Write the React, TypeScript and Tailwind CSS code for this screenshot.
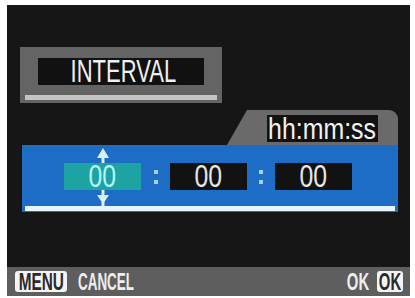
import React from 'react';

const font = { fontFamily: '"Liberation Sans", Arial, sans-serif' };

function Squeezed({ text, className }: { text: string; className: string }) {
  return <span className={`inline-block whitespace-nowrap leading-none ${className}`}>{text}</span>;
}

function Colon() {
  return (
    <div className="w-[28px] h-[27px] flex flex-col items-center justify-center gap-[6px]">
      <div className="w-[4px] h-[4px] bg-[#9fd4f2]" />
      <div className="w-[4px] h-[4px] bg-[#9fd4f2]" />
    </div>
  );
}

function Field({ active }: { active?: boolean }) {
  return (
    <div
      className={`relative w-[77px] h-[27px] flex items-center justify-center ${
        active ? 'bg-[#1ea3a3]' : 'bg-[#121212]'
      }`}
    >
      <Squeezed
        text="00"
        className={`text-[31px] scale-x-[0.8] ${active ? 'text-[#b5f3f5]' : 'text-[#e6e6e6]'}`}
      />
      {active && (
        <>
          <svg className="absolute left-[33px] -top-[15px]" width="12" height="15" viewBox="0 0 12 15">
            <polygon points="6,0 12,10 0,10" fill="#d8f2f6" />
            <rect x="4.5" y="10" width="3" height="5" fill="#d8f2f6" />
          </svg>
          <svg className="absolute left-[33px] -bottom-[17px]" width="12" height="17" viewBox="0 0 12 17">
            <rect x="4.5" y="0" width="3" height="5" fill="#d8f2f6" />
            <polygon points="0,5 12,5 6,14" fill="#d8f2f6" />
            <rect x="4.5" y="12" width="3" height="5" fill="#d8f2f6" />
          </svg>
        </>
      )}
    </div>
  );
}

export default function App() {
  return (
    <div className="w-[415px] h-[298px] bg-white overflow-hidden pt-[5px]" style={font}>
      <div className="ml-[7px] w-[403px] h-[291px] bg-[#161616] flex flex-col">
        <div className="flex-1 flex flex-col pt-[42px]">
          {/* title box */}
          <div className="ml-[13px] w-[202px] h-[56px] bg-[#646464] flex flex-col">
            <div className="ml-[18px] mt-[11px] w-[166px] h-[27px] bg-[#111111] flex items-center justify-center">
              <Squeezed text="INTERVAL" className="text-[31px] text-[#f0f0f0] scale-x-[0.71] translate-x-[2px]" />
            </div>
            <div className="mx-[5px] mt-[10px] h-[5px] bg-[#c4c4c4]" />
          </div>

          {/* time setting */}
          <div className="ml-[15px] mt-[7px] w-[376px] flex flex-col">
            <div className="self-end w-[171px] h-[35px] bg-[#6a6a6a] rounded-tr-[9px] [clip-path:polygon(20px_0,100%_0,100%_100%,0_100%)] pt-[5px] pl-[40px]">
              <div className="w-[111px] h-[27px] bg-[#121212] flex items-center justify-center">
                <Squeezed text="hh:mm:ss" className="text-[30px] text-[#f2f2f2] scale-x-[0.83]" />
              </div>
            </div>
            <div className="h-[67px] bg-[#1d6cc5] flex flex-col">
              <div className="flex items-center pt-[18px] pl-[42px]">
                <Field active />
                <div className="w-[1px]" />
                <Colon />
                <Field />
                <Colon />
                <Field />
              </div>
              <div className="mt-auto mb-[1px] mx-[3px] h-[5px] bg-[#e8f4fb]" />
            </div>
          </div>
        </div>

        {/* bottom bar */}
        <div className="h-[29px] bg-[#5e5e5e] flex items-center pl-[8px] pr-[7px]">
          <div className="w-[52px] h-[21px] bg-[#f4f4f4] rounded-[3px] flex items-center justify-center">
            <Squeezed text="MENU" className="text-[24px] font-bold text-[#2a2a2a] scale-x-[0.64]" />
          </div>
          <div className="ml-[10px] w-[58px] flex items-center justify-center">
            <Squeezed text="CANCEL" className="text-[24px] font-bold text-[#eeeeee] scale-x-[0.56]" />
          </div>
          <div className="ml-auto w-[22px] flex items-center justify-center">
            <Squeezed text="OK" className="text-[24px] font-bold text-[#eeeeee] scale-x-[0.62]" />
          </div>
          <div className="ml-[8px] w-[26px] h-[21px] bg-[#f4f4f4] rounded-[3px] flex items-center justify-center">
            <Squeezed text="OK" className="text-[24px] font-bold text-[#2a2a2a] scale-x-[0.62]" />
          </div>
        </div>
      </div>
    </div>
  );
}
